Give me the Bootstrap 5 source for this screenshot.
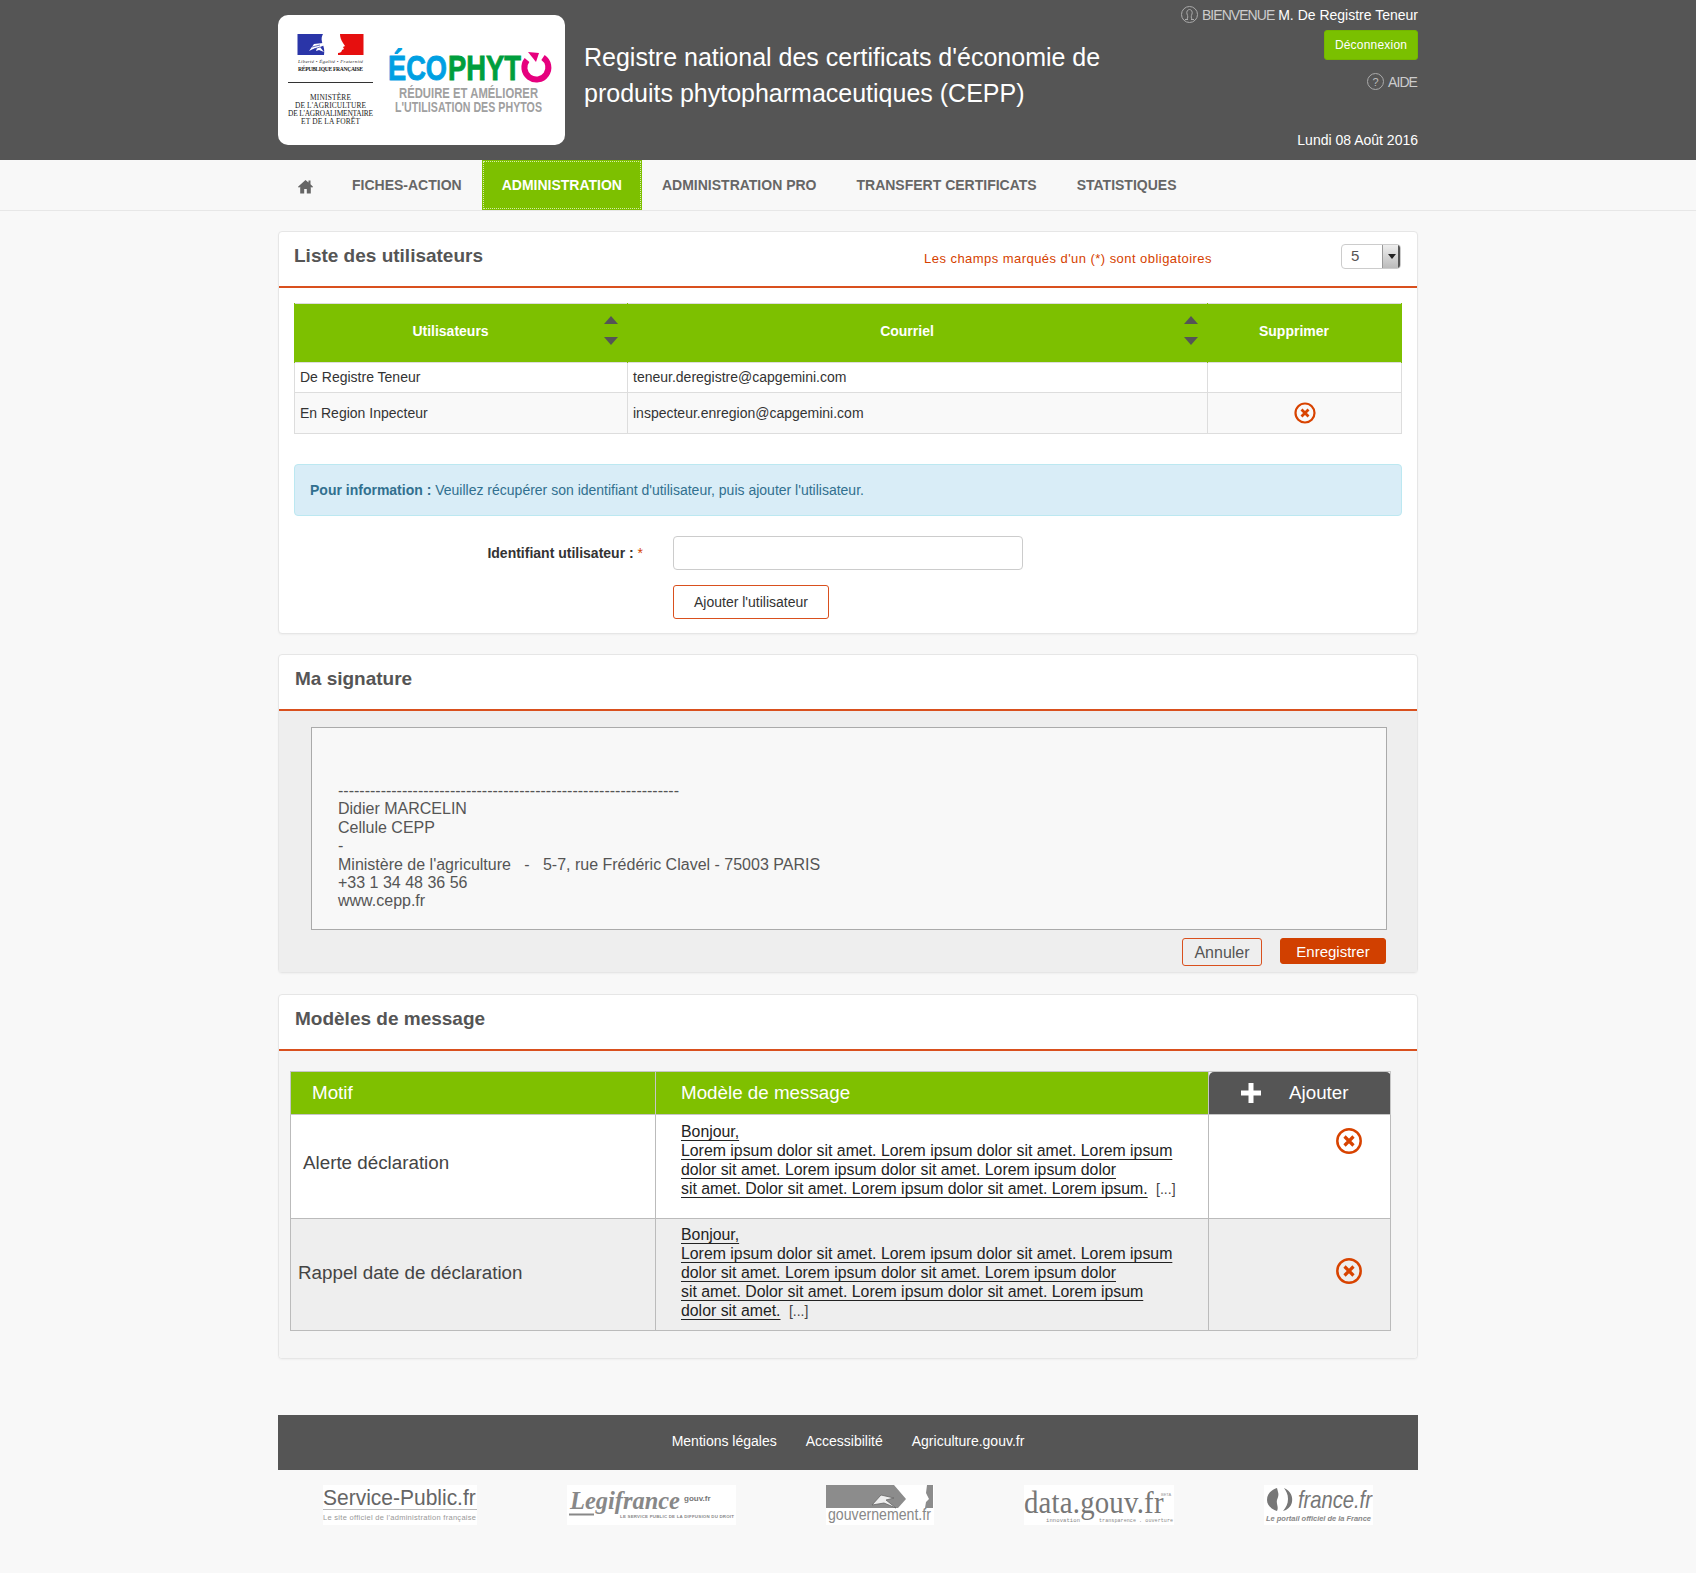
<!DOCTYPE html>
<html lang="fr">
<head>
    <meta charset="UTF-8">
    <meta name="viewport" content="width=device-width, initial-scale=1.0">
    <title>Registre national des CEPP</title>
    <link href="https://cdn.jsdelivr.net/npm/bootstrap@5.3.0/dist/css/bootstrap.min.css" rel="stylesheet">
    <style>
        body {
            background-color: #f8f8f8;
            font-family: "Liberation Sans", Arial, sans-serif;
            font-size: 14px;
            color: #333;
        }
        .page-wrap {
            width: 1140px;
            margin: 0 auto;
        }

        /* bandeau */
        .top-band {
            background-color: #555;
            height: 160px;
            color: #fff;
        }
        .top-inner {
            height: 160px;
        }
        .logo-box {
            width: 287px;
            height: 130px;
            margin-top: 15px;
            background-color: #fff;
            border-radius: 10px;
            flex-shrink: 0;
        }
        .site-title {
            margin: 39px 0 0 19px;
            font-size: 25px;
            line-height: 36px;
            font-weight: 400;
        }
        .user-zone {
            text-align: right;
            padding-top: 6px;
            line-height: 16px;
        }
        .user-zone .dim {
            color: #ccc;
            letter-spacing: -0.95px;
        }
        .logout-btn {
            display: inline-block;
            margin-top: 7px;
            width: 94px;
            height: 30px;
            padding: 0;
            line-height: 28px;
            font-size: 12px;
            letter-spacing: .2px;
            color: #fff;
            background-color: #7ac000;
            border: 1px solid #74b500;
            border-radius: 3px;
        }
        .help-line {
            margin-top: 13px;
            padding-right: 1px;
        }
        .date-line {
            margin-top: 42px;
        }

        /* menu */
        .menu-band {
            height: 51px;
            border-bottom: 1px solid #e7e7e7;
        }
        .menu-band .nav-link {
            height: 50px;
            padding: 0 20px;
            line-height: 50px;
            font-size: 14px;
            font-weight: 700;
            color: #666;
        }
        .menu-band .nav-link.home-link {
            padding: 0 19px 0 20px;
        }
        .menu-band .nav-link.active {
            color: #fff;
            background-color: #7dc000;
            outline: 1px dotted #d6eea8;
            outline-offset: -2px;
            box-shadow: 0 0 0 1px #7dc000 inset;
        }

        /* blocs */
        .panel-box {
            border: 1px solid #e6e6e6;
            border-radius: 4px;
            background-color: #fff;
            box-shadow: 0 1px 2px rgba(0, 0, 0, .04);
        }
        .panel-box .card-header {
            height: 56px;
            padding: 0 15px;
            background-color: #fff;
            border-bottom: 2px solid #d9501e;
        }
        .panel-title {
            margin: 0;
            font-size: 19px;
            line-height: 48px;
            font-weight: 700;
            color: #555;
        }
        .mandatory-note {
            font-size: 13px;
            font-weight: 400;
            letter-spacing: .45px;
            color: #d63f00;
            margin: 19px 0 0 auto;
            line-height: 16px;
        }
        .size-select {
            width: 60px;
            height: 25px;
            margin: 12px 1px 0 129px;
            flex-shrink: 0;
            border: 1px solid #ccc;
            border-radius: 4px;
            font-size: 15px;
            color: #555;
            padding-left: 9px;
            line-height: 22px;
            overflow: hidden;
        }
        .size-arrow {
            width: 18px;
            height: 100%;
            background: linear-gradient(#eee, #bbb);
            border-left: 1px solid #999;
            border-right: 2px solid #555;
            position: relative;
        }
        .size-arrow::after {
            content: "";
            position: absolute;
            left: 5px;
            top: 9px;
            border: 4px solid transparent;
            border-top: 5px solid #222;
        }

        .user-table {
            table-layout: fixed;
            width: calc(100% - 1px);
            margin: 0;
            font-size: 14px;
            border-color: #ddd;
        }
        .user-table > :not(caption) > * > * {
            padding: 0 5px;
            vertical-align: middle;
            border-color: #ddd;
            color: #333;
            box-shadow: none;
        }
        .user-table thead th {
            height: 59px;
            background-color: #7dc000;
            color: #fff;
            font-weight: 700;
            text-align: center;
            padding-right: 26px;
            padding-bottom: 3px;
            border-color: #7dc000;
            position: relative;
        }
        .row-one td { height: 30px; }
        .row-two td { height: 41px; background-color: #f9f9f9; }
        .sort-arrows {
            position: absolute;
            right: 9px;
            top: 12px;
            display: flex;
            flex-direction: column;
            gap: 13px;
        }
        .sort-arrows i {
            display: block;
            width: 0;
            height: 0;
            border-left: 7px solid transparent;
            border-right: 7px solid transparent;
        }
        .sort-arrows .up { border-bottom: 8px solid #555; }
        .sort-arrows .down { border-top: 8px solid #555; }
        .info-box {
            margin: 30px 0 0 0;
            height: 52px;
            padding: 0 15px;
            line-height: 50px;
            color: #31708f;
            background-color: #d9edf7;
            border-color: #bce8f1;
            border-radius: 4px;
        }
        .id-label {
            width: 364px;
            padding-right: 15px;
            text-align: right;
            font-weight: 700;
            color: #333;
            margin: 0;
            flex-shrink: 0;
        }
        .id-label span { color: #d63f00; font-weight: 400; }
        .id-input {
            width: 350px;
            height: 34px;
            margin-left: 15px;
            border-radius: 4px;
            border-color: #ccc;
        }
        .outline-btn {
            width: 156px;
            height: 34px;
            margin: 15px 0 0 379px;
            padding: 0;
            font-size: 14px;
            color: #333;
            background-color: #fff;
            border: 1px solid #d9501e;
            border-radius: 3px;
        }

        .sign-body {
            background-color: #eee;
            padding: 16px 30px 5px 32px;
            height: 261px;
        }
        .sign-text {
            height: 203px;
            padding: 54px 0 0 26px;
            background-color: #f8f8f8;
            border: 1px solid #aaa;
            font-size: 16px;
            line-height: 18.4px;
            color: #555;
        }
        .sign-actions {
            margin-top: 8px;
            padding-right: 1px;
            gap: 18px;
        }
        .cancel-btn, .save-btn {
            font-size: 16px;
            padding: 0;
            height: 28px;
            line-height: 25px;
            border-radius: 3px;
        }
        .cancel-btn {
            width: 80px;
            color: #555;
            background-color: transparent;
            border: 1px solid #d9501e;
        }
        .save-btn {
            width: 106px;
            height: 26px;
            font-size: 15px;
            color: #fff;
            background-color: #d14000;
            border: 1px solid #d14000;
        }

        .model-body {
            background-color: #f5f5f5;
            padding: 20px 27px 0 11px;
            height: 307px;
            border-radius: 0 0 4px 4px;
        }
        .model-table {
            table-layout: fixed;
            margin: 0;
            font-size: 18.8px;
            border-collapse: collapse;
        }
        .model-table > :not(caption) > * > * {
            padding: 0;
            border: 2px solid #bbb;
            border-width: 1px 1px;
            box-shadow: none;
            color: #444;
        }
        .model-table thead th {
            height: 43px;
            font-weight: 400;
            color: #fff;
            background-color: #7fc000;
            vertical-align: middle;
            border-color: #c6c6c6;
        }
        .model-table thead th.add-col {
            background-color: #555;
            border-radius: 5px 5px 0 0;
            text-align: left;
        }
        .model-table .first-row td { height: 104px; background-color: #fff; }
        .model-table .second-row td { height: 112px; background-color: #eee; }
        .model-table td.motif-cell { vertical-align: middle; }
        .msg-text {
            display: block;
            padding: 7px 0 0 25px;
            font-size: 15.85px;
            line-height: 19px;
            color: #222;
        }
        .second-row .msg-text { padding-top: 6px; }
        .msg-text a {
            color: #222;
            text-decoration: underline;
            text-underline-offset: 3px;
        }
        .msg-text .more {
            margin-left: 4px;
            font-size: 14px;
            color: #444;
        }
        .del-icon { display: block; margin: 0 auto; }
        .del-icon.big-icon { margin: 0 0 0 127px; }

        /* pied */
        .foot-links {
            margin-top: 56px;
            height: 55px;
            background-color: #555;
            gap: 29px;
            padding-bottom: 2px;
        }
        .foot-links a {
            color: #fff;
            text-decoration: none;
        }
        .partner-row {
            margin-top: 15px;
            height: 40px;
            margin-bottom: 48px;
        }
        .partner-row svg { display: block; background-color: #fff; }
    </style>
</head>
<body>
    <header class="top-band">
        <div class="page-wrap top-inner d-flex">
            <div class="logo-box">
                <svg width="287" height="130" viewBox="0 0 287 130" font-family="Liberation Sans, Arial, sans-serif">
                    <rect x="19.500" y="19" width="30" height="21" fill="#2a35a8"/>
                    <rect x="60" y="19" width="25.500" height="21" fill="#e60f0f"/>
                    <path d="M45 19h17c0 3 1 6 3 9l2 3-2 1 1 2-2 1c0 2-2 3-4 3-4 0-7 1-9 2h-5c1-6-1-10-2-13-1-4 0-6 1-8z" fill="#fff"/>
                    <path d="M31 36l5-7 9-1 2 2-5 2 4 5-5-2-3 1 1-3-4 1z" fill="#fff"/>
                    <path d="M34 32l8-2M36 34l6-2" stroke="#2a35a8" stroke-width=".7"/>
                    <text x="20" y="48" font-size="5" font-style="italic" font-family="Liberation Serif, serif" fill="#333" textLength="65">Liberté • Égalité • Fraternité</text>
                    <text x="20" y="56" font-size="5.600" font-weight="700" font-family="Liberation Serif, serif" fill="#222" textLength="65">RÉPUBLIQUE FRANÇAISE</text>
                    <rect x="10" y="67" width="85" height="1" fill="#333"/>
                    <g font-family="Liberation Serif, serif" font-size="7.400" fill="#222">
                        <text x="32" y="85" textLength="41">MINISTÈRE</text>
                        <text x="17" y="93" textLength="71">DE L'AGRICULTURE</text>
                        <text x="10" y="101" textLength="85">DE L'AGROALIMENTAIRE</text>
                        <text x="23" y="109" textLength="59">ET DE LA FORÊT</text>
                    </g>
                    <g font-weight="700">
                        <text transform="translate(110 65) scale(.756 1)" font-size="36" fill="#00a0e3" stroke="#00a0e3" stroke-width=".9" textLength="78">ÉCO</text>
                        <text transform="translate(170 65) scale(.76 1)" font-size="36" fill="#009e3d" stroke="#009e3d" stroke-width=".9" textLength="96">PHYT</text>
                        <text transform="translate(121 83) scale(.805 1)" font-size="14" fill="#a0a0a0" textLength="172.700">RÉDUIRE ET AMÉLIORER</text>
                        <text transform="translate(117 97) scale(.758 1)" font-size="14" fill="#a0a0a0" textLength="193.900">L'UTILISATION DES PHYTOS</text>
                    </g>
                    <path d="M265 42.500A12 12 0 1 1 249 45" fill="none" stroke="#e6007e" stroke-width="6"/>
                    <path d="M250 37l11 1-3 9z" fill="#e6007e"/>
                </svg>
            </div>
            <h1 class="site-title">Registre national des certificats d'économie de<br>produits phytopharmaceutiques (CEPP)</h1>
            <div class="user-zone ms-auto">
                <div>
                    <svg width="17" height="17" viewBox="0 0 17 17" class="align-text-bottom" fill="none" stroke="#aaa">
                        <circle cx="8.500" cy="8.500" r="8"/>
                        <path d="M6 13c1-1 1-3 0-5-.8-2.500.7-4.500 2.500-4.500S11.800 5.500 11 8c-1 2-1 4 0 5M4 13.500h3M10 13.500h3"/>
                    </svg>
                    <span class="dim">BIENVENUE</span> M. De Registre Teneur
                </div>
                <button type="button" class="btn logout-btn">Déconnexion</button>
                <div class="help-line">
                    <svg width="17" height="17" viewBox="0 0 17 17" class="align-text-bottom" fill="none" stroke="#aaa">
                        <circle cx="8.500" cy="8.500" r="8"/>
                        <text x="8.500" y="12.500" font-size="11" text-anchor="middle" fill="#bbb" stroke="none">?</text>
                    </svg>
                    <span class="dim">AIDE</span>
                </div>
                <div class="date-line">Lundi 08 Août 2016</div>
            </div>
        </div>
    </header>

    <nav class="menu-band">
        <ul class="nav page-wrap">
            <li class="nav-item">
                <a class="nav-link home-link" href="#">
                    <svg width="15" height="15" viewBox="0 0 15 15" fill="#666"><path d="M7.500 1L0 7.800l1 1 1.200-1V14.500h4v-4.500h2.600v4.500h4V7.800l1.200 1 1-1L12.500 5.200V1.500h-2v1.900z"/></svg>
                </a>
            </li>
            <li class="nav-item"><a class="nav-link" href="#">FICHES-ACTION</a></li>
            <li class="nav-item"><a class="nav-link active" href="#">ADMINISTRATION</a></li>
            <li class="nav-item"><a class="nav-link" href="#">ADMINISTRATION PRO</a></li>
            <li class="nav-item"><a class="nav-link" href="#">TRANSFERT CERTIFICATS</a></li>
            <li class="nav-item"><a class="nav-link" href="#">STATISTIQUES</a></li>
        </ul>
    </nav>

    <main class="page-wrap">
        <section class="card panel-box" style="margin-top:20px">
            <div class="card-header d-flex">
                <h2 class="panel-title">Liste des utilisateurs</h2>
                <p class="mandatory-note">Les champs marqués d'un (*) sont obligatoires</p>
                <div class="size-select d-flex justify-content-between">5<span class="size-arrow"></span></div>
            </div>
            <div class="card-body" style="padding:15px 15px 14px">
                <table class="table table-bordered user-table">
                    <colgroup><col style="width:333px"><col style="width:580px"><col style="width:194px"></colgroup>
                    <thead>
                        <tr>
                            <th>Utilisateurs<span class="sort-arrows"><i class="up"></i><i class="down"></i></span></th>
                            <th>Courriel<span class="sort-arrows"><i class="up"></i><i class="down"></i></span></th>
                            <th>Supprimer</th>
                        </tr>
                    </thead>
                    <tbody>
                        <tr class="row-one">
                            <td>De Registre Teneur</td>
                            <td>teneur.deregistre@capgemini.com</td>
                            <td></td>
                        </tr>
                        <tr class="row-two">
                            <td>En Region Inpecteur</td>
                            <td>inspecteur.enregion@capgemini.com</td>
                            <td>
                                <svg class="del-icon" width="22" height="22" viewBox="0 0 22 22" fill="none" stroke="#d84300">
                                    <circle cx="11" cy="11" r="9.500" stroke-width="2.200"/>
                                    <path d="M7.500 7.500l7 7M14.500 7.500l-7 7" stroke-width="2.800"/>
                                </svg>
                            </td>
                        </tr>
                    </tbody>
                </table>
                <div class="alert alert-info info-box" role="alert">
                    <strong>Pour information :</strong> Veuillez récupérer son identifiant d'utilisateur, puis ajouter l'utilisateur.
                </div>
                <div class="d-flex align-items-center" style="margin-top:20px">
                    <label class="id-label" for="idUser">Identifiant utilisateur : <span>*</span></label>
                    <input type="text" class="form-control id-input" id="idUser">
                </div>
                <button type="button" class="btn outline-btn">Ajouter l'utilisateur</button>
            </div>
        </section>

        <section class="card panel-box" style="margin-top:20px">
            <div class="card-header">
                <h2 class="panel-title" style="padding-left:1px">Ma signature</h2>
            </div>
            <div class="sign-body">
                <div class="sign-text">
                    ----------------------------------------------------------------<br>
                    Didier MARCELIN<br>
                    Cellule CEPP<br>
                    -<br>
                    Ministère de l'agriculture &nbsp; - &nbsp; 5-7, rue Frédéric Clavel - 75003 PARIS<br>
                    +33 1 34 48 36 56<br>
                    www.cepp.fr
                </div>
                <div class="d-flex justify-content-end sign-actions">
                    <button type="button" class="btn cancel-btn">Annuler</button>
                    <button type="button" class="btn save-btn">Enregistrer</button>
                </div>
            </div>
        </section>

        <section class="card panel-box" style="margin-top:21px">
            <div class="card-header">
                <h2 class="panel-title" style="padding-left:1px">Modèles de message</h2>
            </div>
            <div class="model-body">
                <table class="table model-table">
                    <colgroup><col style="width:365px"><col style="width:553px"><col style="width:182px"></colgroup>
                    <thead>
                        <tr>
                            <th style="padding-left:21px">Motif</th>
                            <th style="padding-left:25px">Modèle de message</th>
                            <th class="add-col">
                                <div class="d-flex align-items-center" style="padding-left:32px;gap:28px">
                                    <svg width="20" height="20" viewBox="0 0 20 20" fill="#fff"><path d="M7.500 0h5v7.500H20v5h-7.500V20h-5v-7.500H0v-5h7.500z"/></svg>
                                    <span>Ajouter</span>
                                </div>
                            </th>
                        </tr>
                    </thead>
                    <tbody>
                        <tr class="first-row">
                            <td class="motif-cell" style="padding:0 0 6px 12px">Alerte déclaration</td>
                            <td class="align-top">
                                <span class="msg-text"><a href="#">Bonjour,<br>Lorem ipsum dolor sit amet. Lorem ipsum dolor sit amet. Lorem ipsum<br>dolor sit amet. Lorem ipsum dolor sit amet. Lorem ipsum dolor <br>sit amet. Dolor sit amet. Lorem ipsum dolor sit amet. Lorem ipsum.</a> <span class="more">[...]</span></span>
                            </td>
                            <td class="align-top" style="padding-top:13px">
                                <svg class="del-icon big-icon" width="26" height="26" viewBox="0 0 26 26" fill="none" stroke="#d84300">
                                    <circle cx="13" cy="13" r="11.700" stroke-width="2.500"/>
                                    <path d="M8.500 8.500l9 9M17.500 8.500l-9 9" stroke-width="3.200"/>
                                </svg>
                            </td>
                        </tr>
                        <tr class="second-row">
                            <td class="motif-cell" style="padding:0 0 2px 7px">Rappel date de déclaration</td>
                            <td class="align-top">
                                <span class="msg-text"><a href="#">Bonjour,<br>Lorem ipsum dolor sit amet. Lorem ipsum dolor sit amet. Lorem ipsum<br>dolor sit amet. Lorem ipsum dolor sit amet. Lorem ipsum dolor <br>sit amet. Dolor sit amet. Lorem ipsum dolor sit amet. Lorem ipsum <br>dolor sit amet.</a> <span class="more">[...]</span></span>
                            </td>
                            <td class="align-middle" style="padding-bottom:8px">
                                <svg class="del-icon big-icon" width="26" height="26" viewBox="0 0 26 26" fill="none" stroke="#d84300">
                                    <circle cx="13" cy="13" r="11.700" stroke-width="2.500"/>
                                    <path d="M8.500 8.500l9 9M17.500 8.500l-9 9" stroke-width="3.200"/>
                                </svg>
                            </td>
                        </tr>
                    </tbody>
                </table>
            </div>
        </section>
    </main>

    <footer class="page-wrap">
        <div class="foot-links d-flex justify-content-center align-items-center">
            <a href="#">Mentions légales</a>
            <a href="#">Accessibilité</a>
            <a href="#">Agriculture.gouv.fr</a>
        </div>
        <div class="partner-row d-flex justify-content-around">
            <svg width="154" height="40" viewBox="0 0 154 40" font-family="Liberation Sans, sans-serif">
                <text transform="translate(0 20) scale(.955 1)" font-size="22" fill="#666" textLength="160">Service-Public.fr</text>
                <rect x="0" y="24" width="154" height="1" fill="#bbb"/>
                <text x="0" y="35" font-size="7.500" fill="#999" textLength="153">Le site officiel de l'administration française</text>
            </svg>
            <svg width="169" height="40" viewBox="0 0 169 40" font-family="Liberation Serif, serif">
                <text transform="translate(3 24) scale(.94 1)" font-size="26" font-weight="700" font-style="italic" fill="#888" textLength="117">Legifrance</text>
                <text x="117" y="15.500" font-size="8" font-weight="700" font-family="Liberation Sans, sans-serif" fill="#777">gouv.fr</text>
                <rect x="2" y="28.500" width="25" height="2" fill="#888"/>
                <text x="53" y="33" font-size="4.400" font-weight="700" font-family="Liberation Sans, sans-serif" fill="#888" textLength="114">LE SERVICE PUBLIC DE LA DIFFUSION DU DROIT</text>
            </svg>
            <svg width="108" height="40" viewBox="0 0 108 40" font-family="Liberation Sans, sans-serif">
                <rect x="0" y="0" width="107" height="23" fill="#8c8c8c"/>
                <path d="M68 0h33l-1 8 3 6-3 3-1 6H72l8-9z" fill="#fff"/>
                <path d="M46 20l9-10 13 3-8 2 10 8-12-5z" fill="#eee" stroke="#666" stroke-width=".8"/>
                <text transform="translate(2 35) scale(.883 1)" font-size="16" fill="#888" textLength="116.600">gouvernement.fr</text>
            </svg>
            <svg width="150" height="40" viewBox="0 0 150 40" font-family="Liberation Serif, serif">
                <text transform="translate(0 28) scale(.9 1)" font-size="32" fill="#777" textLength="155">data.gouv.fr</text>
                <text x="137" y="11" font-size="4" font-family="Liberation Sans, sans-serif" fill="#999">BETA</text>
                <text x="22" y="37" font-size="5.500" font-family="Liberation Mono, monospace" fill="#888" textLength="34">innovation</text>
                <text x="75" y="37" font-size="5" font-family="Liberation Mono, monospace" fill="#888" textLength="74">transparence . ouverture</text>
            </svg>
            <svg width="109" height="40" viewBox="0 0 109 40" font-family="Liberation Sans, sans-serif">
                <path d="M13 3C7 5 3 9 3 15c0 5 4 9 10 11 2-4-1-7 0-11 1-3 2-5 1-8z" fill="#777"/>
                <path d="M20 3c7 3 9 9 8 14-1 5-5 8-9 9 3-4 5-7 5-12 0-5-2-8-4-11z" fill="#777"/>
                <text transform="translate(34 23) scale(.88 1)" font-size="23" font-style="italic" fill="#777" textLength="84">france.fr</text>
                <text x="2" y="36" font-size="7.500" font-style="italic" font-weight="700" fill="#888" textLength="105">Le portail officiel de la France</text>
            </svg>
        </div>
    </footer>

    <script src="https://cdn.jsdelivr.net/npm/bootstrap@5.3.0/dist/js/bootstrap.bundle.min.js"></script>
</body>
</html>
